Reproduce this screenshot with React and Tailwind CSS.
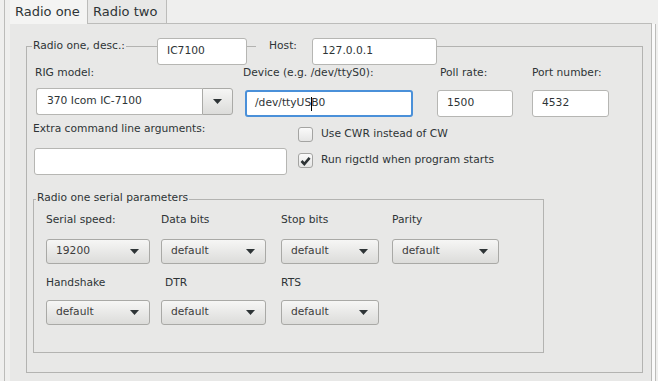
import React from "react";

function Tri() {
  return (
    <svg width="9" height="5" viewBox="0 0 9 5" className="shrink-0">
      <polygon points="0,0 9,0 4.5,5" fill="#2e3436" />
    </svg>
  );
}

function Input({ w, value, children, focused }) {
  return (
    <div
      className={`flex h-[27px] items-center rounded-[3px] bg-white text-[#2e3436] ${w} ${
        focused ? "border-2 border-[#4a90d9] pl-[8px]" : "border border-[#b6b6b3] pl-[9px]"
      }`}
    >
      {children ?? value}
    </div>
  );
}

function Combo({ w, value }) {
  return (
    <div
      className={`flex h-[25px] items-center justify-between rounded-[3px] border border-[#a9a9a6] bg-gradient-to-b from-[#f6f6f5] to-[#dcdcda] pl-[9px] pr-[10px] text-[#3c3c3c] ${w}`}
    >
      <span>{value}</span>
      <Tri />
    </div>
  );
}

function Check({ checked, label }) {
  return (
    <div className="flex h-[15px] items-center">
      <div className="flex h-[15px] w-[15px] items-center justify-center rounded-[3px] border border-[#a4a4a2] bg-gradient-to-b from-[#fafafa] to-[#e6e6e5]">
        {checked && (
          <svg width="11" height="10" viewBox="0 0 11 10">
            <path d="M1.5 5 L4.3 8 L9.6 1.8" stroke="#2e3436" strokeWidth="2.6" fill="none" />
          </svg>
        )}
      </div>
      <span className="ml-[8px]">{label}</span>
    </div>
  );
}

export default function App() {
  return (
    <div className="flex h-[381px] w-[658px] overflow-hidden bg-[#efefee] font-['DejaVu_Sans',sans-serif] text-[10.7px] text-[#2e3436]">
      <div className="ml-[4px] w-px bg-[#bcbcba]" />
      <div className="w-[5px]" />
      <div className="flex w-[642px] flex-col">
        {/* tab bar */}
        <div className="flex h-[24px] shrink-0 items-stretch">
          <div className="flex w-[78px] items-center border-r border-[#bcbcba] bg-[#f4f4f3] pl-[5px] text-[13px] text-[#2e3436]">
            Radio one
          </div>
          <div className="flex w-[79px] items-center border-r border-b border-[#bcbcba] bg-[#e8e8e7] pl-[5px] text-[13px] text-[#2e3436]">
            Radio two
          </div>
          <div className="flex-1 border-b border-[#bcbcba]" />
        </div>
        {/* pane */}
        <div className="flex-1 border-r border-[#b9b9b7] bg-[#e8e8e7] pl-[16px] pt-[22px]">
          <div className="h-[327px] w-[617px] border border-[#b3b3b1]">
            {/* header */}
            <div className="-mt-[9px] flex h-[26px] items-start">
              <div className="w-[130px] pl-[5px]">
                <span className="inline-block h-[16px] bg-[#e8e8e7] px-[1px] leading-[16px]">
                  Radio one, desc.:
                </span>
              </div>
              <Input w="w-[90px]" value="IC7100" />
              <div className="flex w-[65px]">
                <div className="w-[9px]" />
                <span className="inline-block h-[16px] w-[56px] bg-[#e8e8e7] pl-[13px] leading-[16px]">
                  Host:
                </span>
              </div>
              <Input w="w-[125px]" value="127.0.0.1" />
            </div>

            {/* row A */}
            <div className="flex h-[54px]">
              <div className="w-[216px] pl-[8px]">
                <div className="mt-[1px] h-[16px] leading-[16px]">RIG model:</div>
                <div className="ml-[1px] mt-[7px] flex h-[27px] w-[197px]">
                  <div className="flex flex-1 items-center rounded-l-[3px] border border-r-0 border-[#b6b6b3] bg-white pl-[10px]">
                    370 Icom IC-7100
                  </div>
                  <div className="flex w-[31px] items-center justify-center rounded-r-[3px] border border-[#aaaaa7] bg-gradient-to-b from-[#f6f6f5] to-[#dcdcda]">
                    <Tri />
                  </div>
                </div>
              </div>
              <div className="w-[194px]">
                <div className="mt-[1px] h-[16px] leading-[16px]">Device (e.g. /dev/ttyS0):</div>
                <div className="ml-[2px] mt-[9px]">
                  <Input w="w-[168px]" focused>
                    <span>/dev/ttyUS</span>
                    <span className="inline-block h-[14px] w-px bg-black" />
                    <span className="-ml-px">B0</span>
                  </Input>
                </div>
              </div>
              <div className="w-[95px]">
                <div className="mt-[1px] h-[16px] pl-[3px] leading-[16px]">Poll rate:</div>
                <div className="mt-[9px]">
                  <Input w="w-[76px]" value="1500" />
                </div>
              </div>
              <div>
                <div className="mt-[1px] h-[16px] leading-[16px]">Port number:</div>
                <div className="mt-[9px]">
                  <Input w="w-[77px]" value="4532" />
                </div>
              </div>
            </div>

            {/* row B */}
            <div className="flex h-[57px]">
              <div className="w-[271px] pl-[6px]">
                <div className="mt-[3px] h-[16px] leading-[16px]">Extra command line arguments:</div>
                <div className="ml-[1px] mt-[11px]">
                  <Input w="w-[253px]" value="" />
                </div>
              </div>
              <div className="flex flex-col">
                <div className="mt-[9px]">
                  <Check label="Use CWR instead of CW" />
                </div>
                <div className="mt-[11px]">
                  <Check checked label="Run rigctld when program starts" />
                </div>
              </div>
            </div>

            {/* serial groupbox */}
            <div className="ml-[6px] mt-[24px] h-[154px] w-[511px] border border-[#b3b3b1]">
              <div className="-mt-[10px] ml-[2px] h-[16px]">
                <span className="inline-block h-[16px] bg-[#e8e8e7] px-[1px] leading-[16px]">
                  Radio one serial parameters
                </span>
              </div>
              <div className="pl-[12px]">
                <div className="mt-[6px] flex h-[16px] leading-[16px]">
                  <div className="w-[115px]">Serial speed:</div>
                  <div className="w-[120px]">Data bits</div>
                  <div className="w-[111px]">Stop bits</div>
                  <div>Parity</div>
                </div>
                <div className="mt-[11px] flex">
                  <div className="w-[115px]">
                    <Combo w="w-[104px]" value="19200" />
                  </div>
                  <div className="w-[120px]">
                    <Combo w="w-[105px]" value="default" />
                  </div>
                  <div className="w-[111px]">
                    <Combo w="w-[98px]" value="default" />
                  </div>
                  <div>
                    <Combo w="w-[107px]" value="default" />
                  </div>
                </div>
                <div className="mt-[11px] flex h-[16px] leading-[16px]">
                  <div className="w-[115px]">Handshake</div>
                  <div className="w-[120px] pl-[4px]">DTR</div>
                  <div className="w-[111px]">RTS</div>
                </div>
                <div className="mt-[9px] flex">
                  <div className="w-[115px]">
                    <Combo w="w-[104px]" value="default" />
                  </div>
                  <div className="w-[120px]">
                    <Combo w="w-[105px]" value="default" />
                  </div>
                  <div className="w-[111px]">
                    <Combo w="w-[98px]" value="default" />
                  </div>
                </div>
              </div>
            </div>
          </div>
        </div>
      </div>
      <div className="mt-[24px] w-[3px] bg-[#fafafa]" />
      <div className="mt-[24px] w-px bg-[#bcbcba]" />
    </div>
  );
}
